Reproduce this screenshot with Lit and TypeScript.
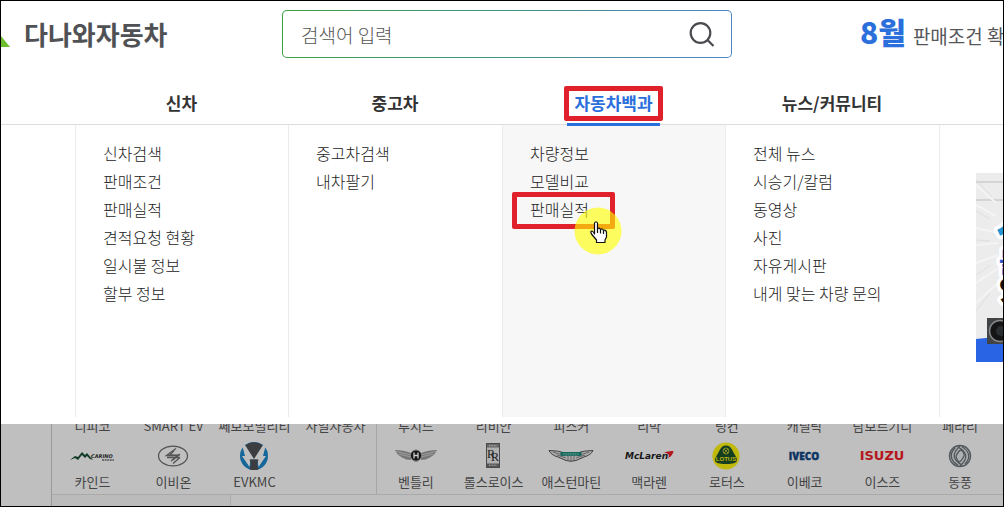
import { LitElement, html, css, svg, nothing } from "lit";
import { customElement } from "lit/decorators.js";
import { classMap } from "lit/directives/class-map.js";

interface MenuGroup {
  title: string;
  items: string[];
  active?: boolean;
  marked?: string;
}

interface Brand {
  above: string;
  name: string;
  logo: unknown;
}

const MENU: MenuGroup[] = [
  { title: "신차", items: ["신차검색", "판매조건", "판매실적", "견적요청 현황", "일시불 정보", "할부 정보"] },
  { title: "중고차", items: ["중고차검색", "내차팔기"] },
  { title: "자동차백과", items: ["차량정보", "모델비교", "판매실적"], active: true, marked: "판매실적" },
  { title: "뉴스/커뮤니티", items: ["전체 뉴스", "시승기/칼럼", "동영상", "사진", "자유게시판", "내게 맞는 차량 문의"] },
];

const carino = svg`
  <path d="M7 19 L12 15 L15 16 L19 11 L22 14 L24 12 L30 19 L27 18 L24 15 L22 17 L19 14 L15 19 L12 17 Z" fill="#123d26"/>
  <text x="28" y="17" font-family="DejaVu Sans" font-size="5" font-weight="700" font-style="italic" fill="#222">CARINO</text>
  <path d="M39 19 H51" stroke="#555" stroke-width="1.5" stroke-dasharray="2 .6"/>`;

const evion = svg`
  <g fill="none" stroke="#555">
    <ellipse cx="29" cy="15" rx="14.5" ry="9.8" stroke-width="1.3"/>
    <path d="M32 7.500 L22.500 14.500 H35.500 M36 13 L27 20 M35.500 16.500 H23 M29 22.500 L36 16.500" stroke-width="1.400"/>
    <path d="M30 9.500 L26 14 H34 L29 19" stroke-width="1.200"/>
  </g>`;

const evkmc = svg`
  <circle cx="29" cy="15" r="14" fill="#15679b"/>
  <path d="M20 4.500 Q29 -2 38 4.500 L29 19 Z" fill="#3c3d40"/>
  <path d="M17.500 5.500 L20 4 L29 18 L38 4 L40.500 5.500 L38 15 L41 15 L33.500 26 L32.500 18.500 H25.500 L24.500 26 L17 15 L20 15 Z" fill="#bfbfbf"/>
  <path d="M24.500 18.500 H33.500 L32 23 L33.500 28.500 Q29 29.500 24.500 28.500 L26 23 Z" fill="#3c3d40"/>`;

const bentley = svg`
  <path d="M9 9 Q18 9 25 12 L25 19 Q20 19 16 16.500 Q11 14 9 9 Z M51 9 Q42 9 35 12 L35 19 Q40 19 44 16.500 Q49 14 51 9 Z" fill="#777"/>
  <path d="M10 10.500 L25 14 M13 13 L25 16 M50 10.500 L35 14 M47 13 L35 16" stroke="#aaa" stroke-width=".7"/>
  <path d="M26 18 Q30 24 34 18 Z" fill="#777"/>
  <circle cx="30" cy="14.500" r="5.600" fill="#151515" stroke="#8a8a8a"/>
  <path d="M28 11.500 V17.500 M32 11.500 V17.500 M28 14.500 H32" stroke="#ccc" stroke-width="1.300"/>`;

const rolls = svg`
  <rect x="22.500" y="2.500" width="13" height="24" fill="#b0b0b0" stroke="#4a4a4a"/>
  <rect x="23" y="3" width="12" height="3.500" fill="#666"/><rect x="23" y="22.500" width="12" height="3.500" fill="#555"/>
  <path d="M25 4.700 H33 M25 24.200 H33" stroke="#ccc" stroke-width=".8" stroke-dasharray="1 .6"/>
  <text x="23" y="17" font-family="Liberation Serif" font-size="12" fill="#222">R<tspan dx="-4" dy="3">R</tspan></text>`;

const aston = svg`
  <path d="M8 9.500 Q17 9.500 24 12 H36 Q43 9.500 52 9.500 Q50 14 43 16 L35 19.500 Q30 21 25 19.500 L17 16 Q10 14 8 9.500 Z" fill="#aaa" stroke="#404040"/>
  <path d="M12 11 L24 15 M16 14 L25 17 M48 11 L36 15 M44 14 L35 17 M27 15 V19 M30 15 V20 M33 15 V19" stroke="#555" stroke-width=".8"/>
  <rect x="19.500" y="11" width="21" height="3.800" fill="#12675a"/>
  <path d="M22 12.900 H38" stroke="#8dbab0" stroke-width=".8" stroke-dasharray="1.200 .5"/>`;

const mclaren = svg`
  <text x="6" y="18" font-family="DejaVu Sans" font-size="9" font-weight="700" font-style="italic" fill="#171717">McLaren</text>
  <path d="M45 11.500 Q50 9.500 54.500 10 Q54 14.500 49 17 Q52 12.500 45 11.500 Z" fill="#b3171e"/>`;

const lotus = svg`
  <circle cx="29" cy="15" r="13.600" fill="#c0b80c"/>
  <path d="M29 4.500 C34 4.500 35 9 38 14 C41 18.500 41 22 35 22.500 Q29 23.500 23 22.500 C17 22 17 18.500 20 14 C23 9 24 4.500 29 4.500 Z" fill="#153d20"/>
  <circle cx="29" cy="10" r="3" fill="none" stroke="#a4a32a" stroke-width=".8"/>
  <path d="M27 8 L31 12 M31 8 L27 12" stroke="#a4a32a" stroke-width=".8"/>
  <text x="29" y="20" text-anchor="middle" font-family="Liberation Sans" font-size="6" font-weight="700" fill="#c0b80c">LOTUS</text>`;

const iveco = svg`
  <text x="29" y="19" text-anchor="middle" font-family="Open Sans" font-size="10" font-weight="800" fill="#0c3463" stroke="#0c3463" stroke-width=".4">IVECO</text>`;

const isuzu = svg`
  <text x="30" y="19" text-anchor="middle" font-family="DejaVu Sans" font-size="13" font-weight="700" fill="#b5161c">ISUZU</text>`;

const dongfeng = svg`
  <circle cx="30" cy="15" r="10.500" fill="#aeb0b1" stroke="#55595c" stroke-width="1.400"/>
  <g fill="none" stroke="#4f5558" stroke-width="1.300">
    <path d="M30 5 C21 13 23 19 32 24 M30 25 C39 17 37 11 28 6"/>
    <path d="M25 7 C18 14 22 21 28 24 M35 23 C42 16 38 9 32 6"/>
    <path d="M26 15 Q29 9 31 9 Q35 12 34 15 Q31 21 29 21 Q26 18 26 15"/>
  </g>`;

const DOMESTIC: Brand[] = [
  { above: "디피코", name: "카인드", logo: carino },
  { above: "SMART EV", name: "이비온", logo: evion },
  { above: "쎄보모빌리티", name: "EVKMC", logo: evkmc },
  { above: "사일자동차", name: "", logo: nothing },
];

const IMPORTED: Brand[] = [
  { above: "루시드", name: "벤틀리", logo: bentley },
  { above: "리비안", name: "롤스로이스", logo: rolls },
  { above: "피스커", name: "애스턴마틴", logo: aston },
  { above: "리막", name: "맥라렌", logo: mclaren },
  { above: "링컨", name: "로터스", logo: lotus },
  { above: "캐딜락", name: "이베코", logo: iveco },
  { above: "람보르기니", name: "이스즈", logo: isuzu },
  { above: "페라리", name: "동풍", logo: dongfeng },
];

@customElement("site-header")
class SiteHeader extends LitElement {
  static styles = css`
    :host {
      display: grid;
      grid-template-columns: minmax(0, 281fr) minmax(0, 450fr) minmax(0, 271fr);
      align-items: start;
      padding: 9px 0 27px;
      font-family: "Noto Sans CJK KR", sans-serif;
    }
    .logo {
      display: flex;
      align-items: center;
      gap: 14px;
      color: #505154;
      font-size: 26px;
      line-height: 48px;
      font-weight: 700;
      text-decoration: none;
      white-space: nowrap;
    }
    .mark { width: 9px; height: 26px; }
    .search {
      display: flex;
      height: 46px;
      border: 1px solid transparent;
      border-radius: 5px;
      background:
        linear-gradient(#fff, #fff) padding-box,
        linear-gradient(90deg, #36a044, #4f86c6) border-box;
    }
    .field {
      flex: 1;
      min-width: 0;
      padding: 0 18px;
      border: 0;
      outline: 0;
      background: none;
      font: 300 19px "Noto Sans CJK KR", sans-serif;
      color: #333;
    }
    .field::placeholder { color: #555; opacity: 1; }
    .submit {
      display: grid;
      place-items: center;
      width: 58px;
      padding: 0;
      border: 0;
      background: none;
    }
    .promo {
      display: flex;
      align-items: baseline;
      gap: 7px;
      padding-left: 128px;
      overflow: hidden;
      color: #55565a;
      font-size: 19px;
      line-height: 42px;
      text-decoration: none;
      white-space: nowrap;
    }
    .month { color: #2a6fdb; font-size: 30px; font-weight: 900; }
  `;

  render() {
    return html`
      <a class="logo" href="#">
        <svg class="mark" viewBox="0 0 9 26" aria-hidden="true"><path d="M0 15 L9 26 H0 Z" fill="#6cbe2e" /></svg>
        다나와자동차
      </a>
      <form class="search" role="search">
        <input class="field" type="text" placeholder="검색어 입력" aria-label="검색어 입력" />
        <button class="submit" type="button" aria-label="검색">
          <svg width="26" height="26" viewBox="0 0 26 26" fill="none" stroke="#4a4b4e" stroke-width="2.200">
            <circle cx="11.500" cy="12" r="9.800" /><path d="M18.500 19 L24.500 25" />
          </svg>
        </button>
      </form>
      <a class="promo" href="#"><span class="month">8월</span><span>판매조건 확인</span></a>
    `;
  }
}

@customElement("mega-menu")
class MegaMenu extends LitElement {
  static styles = css`
    :host {
      display: block;
      font-family: "Noto Sans CJK KR", sans-serif;
    }
    .row {
      display: grid;
      grid-template-columns:
        minmax(0, 74fr) minmax(0, 213fr) minmax(0, 214fr)
        minmax(0, 223fr) minmax(0, 214fr) minmax(0, 64fr);
    }
    .tabs { height: 39px; border-bottom: 1px solid #ddd; }
    .cell { display: flex; justify-content: center; }
    .tab {
      position: relative;
      height: 38px;
      padding: 0 7px;
      border-bottom: 3px solid transparent;
      color: #333;
      font-size: 17px;
      line-height: 36px;
      font-weight: 700;
      text-decoration: none;
      white-space: nowrap;
    }
    .tab.active { color: #2a6fdb; border-bottom-color: #2a6fdb; }
    .ring {
      position: absolute;
      border: 5px solid #e0212b;
      border-radius: 2px;
      box-sizing: border-box;
      pointer-events: none;
    }
    .tab .ring { inset: 1px -3px 2px; }
    .panels { padding-bottom: 7px; }
    .panel {
      min-height: 292px;
      box-sizing: border-box;
      padding: 14px 0 0 27px;
      border-left: 1px solid #ebebeb;
    }
    .panel.active { background: #f7f7f7; }
    .list { margin: 0; padding: 0; list-style: none; }
    .item { height: 28px; line-height: 28px; }
    .link {
      position: relative;
      color: #222;
      font-size: 16px;
      font-weight: 300;
      text-decoration: none;
      white-space: nowrap;
    }
    .link .ring { inset: -5px -26px -8px -18px; }
    .pointer { position: absolute; left: 44px; top: 10px; }
    .ad { padding: 48px 0 0 36px; overflow: hidden; }
    .banner { display: block; }
  `;

  private pointer() {
    return html`
      <svg class="pointer" width="48" height="48" viewBox="0 0 48 48" aria-hidden="true">
        <circle cx="24" cy="24" r="23.500" fill="#ffff00" fill-opacity=".62" />
        <path
          d="M20.500 27 V16 Q22 13.500 23.500 16 V22 Q25 20 26.500 22.500 Q28.500 21 29.500 23.500 Q31.500 22.500 32.500 25 V30 L31 33 V35.500 H22.500 V33 L17.500 27 Q16 24 18 24 Q19.500 24.500 20.500 27 Z"
          fill="#fff" stroke="#111" stroke-width="1.200" stroke-linejoin="round" />
        <path d="M23.500 21 V26 M26.500 22.500 V26.500 M29.500 23.500 V27" stroke="#111" stroke-width="1.200" />
      </svg>`;
  }

  private banner() {
    return html`
      <svg class="banner" width="190" height="189" viewBox="0 0 190 189" aria-hidden="true">
        <rect width="190" height="189" fill="#ececec" />
        <path d="M0 9 H190 M0 27 H190" stroke="#ccc" stroke-width="1.500" />
        <path d="M0 12 L20 30 M0 32 L20 43 M0 55 L22 60 M0 72 L22 70 M0 90 L22 82 M0 110 L24 94 M0 130 L24 108" stroke="#f4f4f4" stroke-width="2" />
        <path d="M0 7 L16 24 M0 38 L14 46 M0 67 L14 68 M0 102 L15 92 M0 138 L14 120" stroke="#dedede" />
        <text font-family="Noto Sans CJK KR" font-weight="900" stroke="#fff" stroke-width="7" stroke-linejoin="round" paint-order="stroke">
          <tspan x="18" y="67" font-size="46" font-style="italic" fill="#2196d4">사</tspan>
          <tspan x="23" y="99" font-size="26" fill="#2d56cc">블</tspan>
          <tspan x="23" y="127" font-size="26" fill="#101010">있</tspan>
        </text>
        <path d="M0 166 L40 162 H190 V189 H0 Z" fill="#2864e4" />
        <rect x="11" y="145" width="179" height="26" fill="#424345" />
        <circle cx="24" cy="158" r="10.500" fill="#151515" stroke="#85888a" stroke-width="1.500" />
        <circle cx="25" cy="158" r="5" fill="#2b2e30" />
      </svg>`;
  }

  render() {
    return html`
      <nav class="row tabs">
        <span></span>
        ${MENU.map(
          (group) => html`
            <div class="cell">
              <a class=${classMap({ tab: true, active: !!group.active })} href="#">${group.title}${group.active ? html`<span class="ring"></span>` : nothing}</a>
            </div>`
        )}
      </nav>
      <div class="row panels">
        <span></span>
        ${MENU.map(
          (group) => html`
            <div class=${classMap({ panel: true, active: !!group.active })}>
              <ul class="list">
                ${group.items.map(
                  (item) => html`
                    <li class="item">
                      <a class="link" href="#">${item}${item === group.marked
                        ? html`<span class="ring"></span>`
                        : nothing}${item === group.marked ? this.pointer() : nothing}</a>
                    </li>`
                )}
              </ul>
            </div>`
        )}
        <div class="panel ad">${this.banner()}</div>
      </div>
    `;
  }
}

@customElement("brand-board")
class BrandBoard extends LitElement {
  static styles = css`
    :host {
      display: grid;
      grid-template-columns: 50px minmax(0, 1fr);
      background: #bfbfbf;
      overflow: hidden;
      font-family: "Noto Sans CJK KR", sans-serif;
    }
    .board { border-left: 1px solid #999; display: flex; flex-direction: column; }
    .groups {
      display: grid;
      grid-template-columns: minmax(0, 324fr) minmax(0, 627fr);
      border-bottom: 1px solid #aaa;
    }
    .group { display: grid; height: 70px; }
    .domestic { grid-template-columns: repeat(4, minmax(0, 1fr)); }
    .imported {
      grid-template-columns: repeat(8, minmax(0, 1fr));
      padding-right: 4px;
      border-left: 1px solid #a6a6a6;
    }
    .brand {
      display: flex;
      flex-direction: column;
      align-items: center;
      gap: 2px;
      margin-top: -7px;
    }
    .name {
      height: 18px;
      color: #444;
      font-size: 13px;
      line-height: 18px;
      font-weight: 400;
      text-decoration: none;
      white-space: nowrap;
    }
    .logo { display: block; flex: none; padding-top: 4px; }
    .below { flex: 1; display: grid; grid-template-columns: minmax(0, 179fr) minmax(0, 772fr); }
    .side { background: #bbb; border-right: 1px solid #aaa; }
  `;

  private brand(b: Brand) {
    return html`
      <div class="brand">
        <a class="name" href="#">${b.above}</a>
        <svg class="logo" width="60" height="30" viewBox="0 0 60 30" aria-hidden="true">${b.logo}</svg>
        <a class="name" href="#">${b.name}</a>
      </div>`;
  }

  render() {
    return html`
      <span></span>
      <div class="board">
        <div class="groups">
          <div class="group domestic">${DOMESTIC.map((b) => this.brand(b))}</div>
          <div class="group imported">${IMPORTED.map((b) => this.brand(b))}</div>
        </div>
        <div class="below"><div class="side"></div></div>
      </div>
    `;
  }
}

@customElement("app-root")
class AppRoot extends LitElement {
  static styles = css`
    :host {
      display: flex;
      flex-direction: column;
      box-sizing: border-box;
      height: 100vh;
      border: 1px solid #000;
      background: #fff;
      overflow: hidden;
    }
    .brands { flex: 1; }
  `;

  render() {
    return html`
      <site-header></site-header>
      <mega-menu></mega-menu>
      <brand-board class="brands"></brand-board>
    `;
  }
}
